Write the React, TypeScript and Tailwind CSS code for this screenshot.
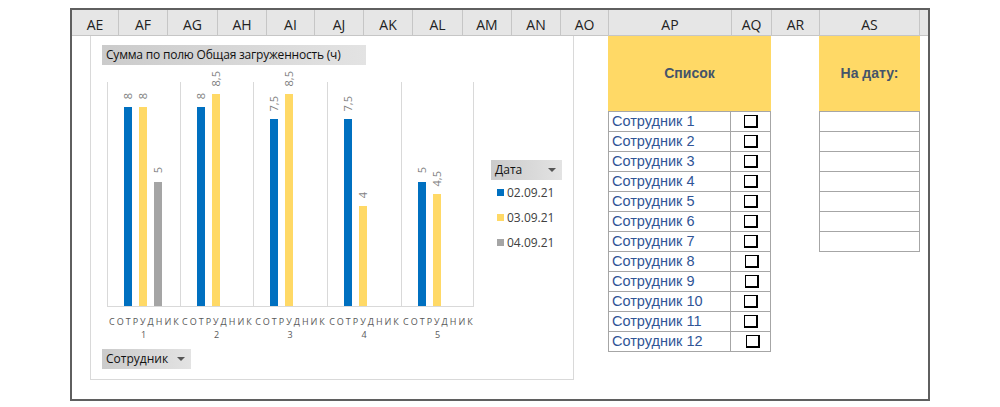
const calibri = { fontFamily: '"Open Sans", "Noto Sans", sans-serif' }

const columns = [
  { name: 'AE', w: 'w-[47px]' },
  { name: 'AF', w: 'w-[49px]' },
  { name: 'AG', w: 'w-[50px]' },
  { name: 'AH', w: 'w-[49px]' },
  { name: 'AI', w: 'w-[48px]' },
  { name: 'AJ', w: 'w-[49px]' },
  { name: 'AK', w: 'w-[49px]' },
  { name: 'AL', w: 'w-[50px]' },
  { name: 'AM', w: 'w-[49px]' },
  { name: 'AN', w: 'w-[49px]' },
  { name: 'AO', w: 'w-[48px]' },
  { name: 'AP', w: 'w-[123px]' },
  { name: 'AQ', w: 'w-[40px]' },
  { name: 'AR', w: 'w-[48px]' },
  { name: 'AS', w: 'w-[100px]' },
]

const seriesColors = ['bg-[#0070c0]', 'bg-[#ffd966]', 'bg-[#a5a5a5]']
const legend = ['02.09.21', '03.09.21', '04.09.21']

const groups = [
  { label: '1', w: 'w-[73px]', values: [8, 8, 5] },
  { label: '2', w: 'w-[73px]', values: [8, 8.5] },
  { label: '3', w: 'w-[74px]', values: [7.5, 8.5] },
  { label: '4', w: 'w-[74px]', values: [7.5, 4] },
  { label: '5', w: 'w-[73px]', values: [5, 4.5] },
]

const PX_PER_HOUR = 24.9

// small nudges so the form checkboxes sit like in the sheet
const boxShift = ['', '', '', '', '', '', '', 'ml-[2px]', 'ml-[2px]', 'ml-[1px]', 'ml-[1px]', 'ml-[4px]']

function PivotButton({
  text,
  arrow,
  className,
}: {
  text: string
  arrow?: boolean
  className: string
}) {
  return (
    <div
      className={`flex h-[20px] items-center justify-between bg-gradient-to-r from-[#cbcbcb] to-[#e3e3e3] pl-[4px] pr-[6px] text-[12px] leading-[20px] text-[#111] ${className}`}
      style={calibri}
    >
      <span>{text}</span>
      {arrow && <span className="h-0 w-0 border-x-[4px] border-t-[4px] border-x-transparent border-t-[#555]" />}
    </div>
  )
}

function Chart() {
  return (
    <div className="flex h-[344px] w-[484px] flex-col border-x border-b border-[#d9d9d9]" style={calibri}>
      <PivotButton
        text="Сумма по полю Общая загруженность (ч)"
        className="ml-[11px] mt-[9px] w-[264px] tracking-[-0.2px]"
      />

      <div className="mt-[17px] flex items-start">
        <div className="ml-[16px] flex h-[225px] border-b border-[#d9d9d9]">
          {groups.map((g, gi) => (
            <div
              key={g.label}
              className={`flex h-full items-end gap-[7px] border-l border-[#d9d9d9] pl-[16px] ${g.w} ${
                gi === groups.length - 1 ? 'border-r' : ''
              }`}
            >
              {g.values.map((v, i) => (
                <div key={i} className="flex h-full w-[8px] flex-col items-center justify-end">
                  <span className="mb-[8px] rotate-180 text-[11px] leading-[12px] text-[#7f7f7f] [writing-mode:vertical-rl]">
                    {String(v).replace('.', ',')}
                  </span>
                  <div className={`w-[8px] shrink-0 ${seriesColors[i]}`} style={{ height: v * PX_PER_HOUR }} />
                </div>
              ))}
            </div>
          ))}
        </div>

        <div className="ml-[17px] mt-[78px] w-[71px]">
          <PivotButton text="Дата" arrow className="w-[71px]" />
          {legend.map((d, i) => (
            <div key={d} className="flex h-[25px] items-center pl-[6px] text-[12px] text-[#404040]">
              <span className={`mr-[3px] h-[7px] w-[7px] ${seriesColors[i]}`} />
              {d}
            </div>
          ))}
        </div>
      </div>

      <div className="ml-[16px] mt-[8px] flex">
        {groups.map((g) => (
          <div
            key={g.label}
            className={`${g.w} pl-[2px] text-center text-[9px] leading-[13px] tracking-[2px] text-[#595959]`}
          >
            <div>СОТРУДНИК</div>
            <div>{g.label}</div>
          </div>
        ))}
      </div>

      <PivotButton text="Сотрудник" arrow className="ml-[11px] mt-[8px] w-[89px]" />
    </div>
  )
}

export default function App() {
  const employees = Array.from({ length: 12 }, (_, i) => `Сотрудник ${i + 1}`)

  return (
    <div className="h-[407px] w-[1000px] bg-white pl-[70px] pt-[8px]">
      <div className="h-[393px] w-[860px] border-2 border-[#5f5f5f] bg-white">
        {/* column headers */}
        <div className="flex h-[26px] border-b border-[#c6c6c6] bg-[#e6e6e6]" style={calibri}>
          {columns.map((c) => (
            <div
              key={c.name}
              className={`flex items-center justify-center border-r border-[#c6c6c6] pt-[4px] text-[14px] text-[#222] ${c.w}`}
            >
              {c.name}
            </div>
          ))}
          <div className="flex-1" />
        </div>

        {/* sheet body */}
        <div className="flex h-[363px] items-start" style={{ fontFamily: '"Liberation Sans", Arial, sans-serif' }}>
          <div className="ml-[18px]">
            <Chart />
          </div>

          <div className="ml-[34px] w-[163px]">
            <div className="flex h-[75px] items-center justify-center bg-[#ffd966] text-[14px] font-bold text-[#44546a]">
              Список
            </div>
            <div className="border-x border-t border-[#a6a6a6]">
              {employees.map((e, i) => (
                <div key={e} className="grid h-[20px] grid-cols-[122px_39px] border-b border-[#a6a6a6]">
                  <div className="border-r border-[#a6a6a6] pl-[3px] text-[14.5px] leading-[19px] text-[#305496]">
                    {e}
                  </div>
                  <div className="flex items-center justify-center">
                    <span
                      className={`h-[13px] w-[14px] border-[1.5px] border-b-2 border-r-2 border-black bg-white ${boxShift[i]}`}
                    />
                  </div>
                </div>
              ))}
            </div>
          </div>

          <div className="ml-[48px] w-[101px]">
            <div className="flex h-[75px] items-center justify-center bg-[#ffd966] text-[14px] font-bold text-[#44546a]">
              На дату:
            </div>
            <div className="border-x border-t border-[#a6a6a6]">
              {Array.from({ length: 7 }, (_, i) => (
                <div key={i} className="h-[20px] border-b border-[#a6a6a6]" />
              ))}
            </div>
          </div>
        </div>
      </div>
    </div>
  )
}
